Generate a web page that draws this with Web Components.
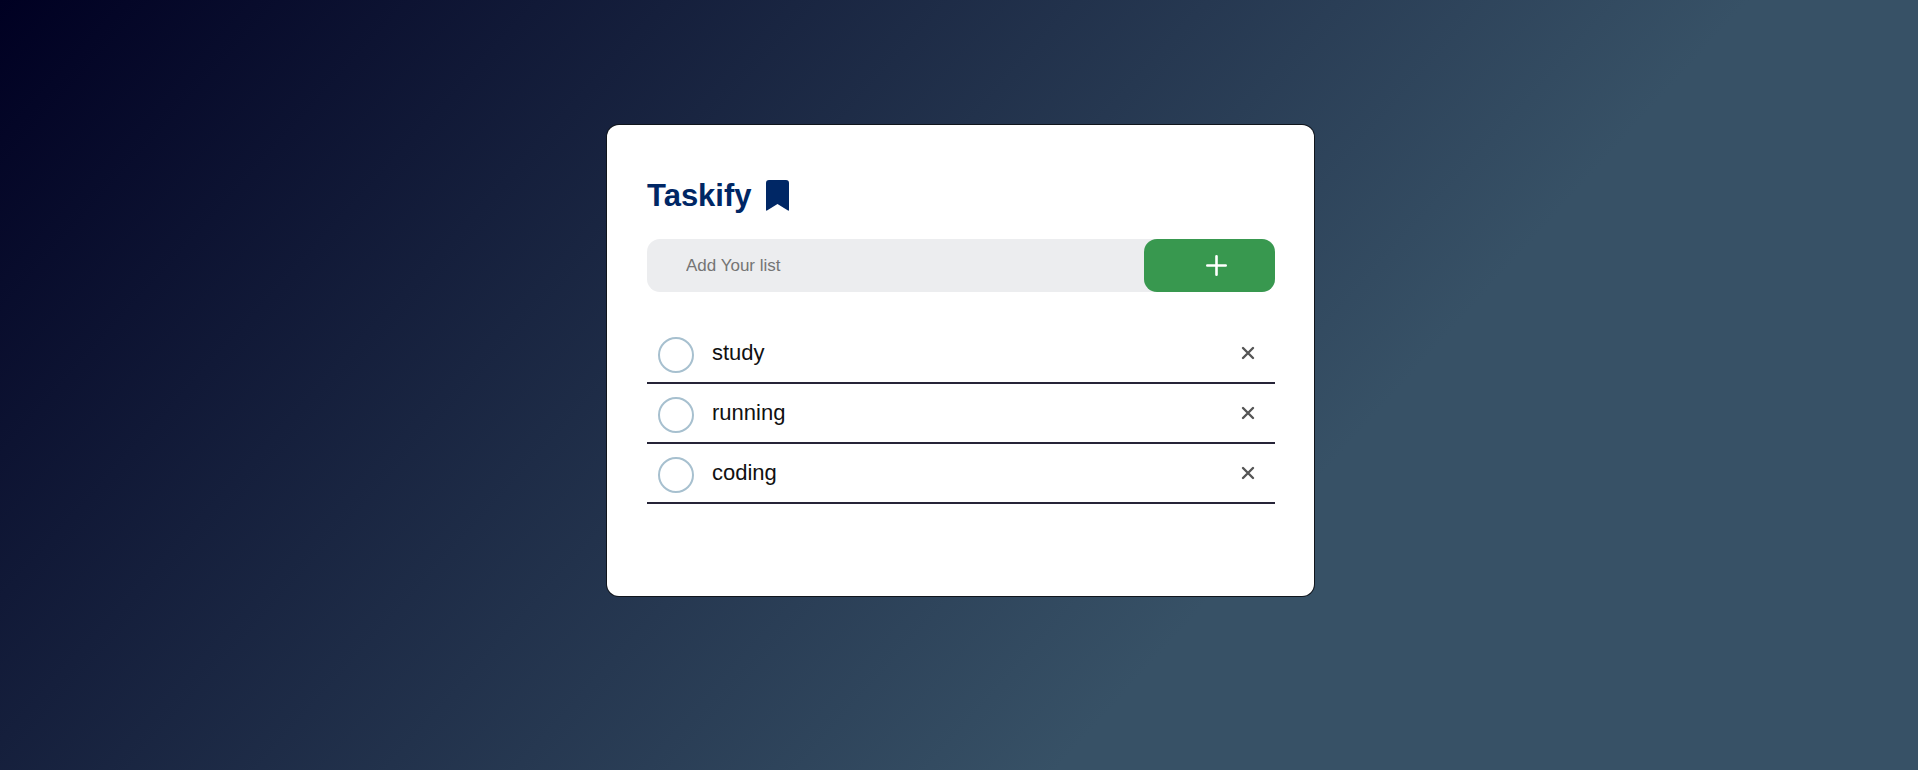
<!DOCTYPE html>
<html lang="en">
<head>
<meta charset="utf-8">
<meta name="viewport" content="width=device-width, initial-scale=1">
<title>Taskify</title>
<style>
  body {
    margin: 0;
    min-height: 100vh;
    box-sizing: border-box;
    padding: 125px 16px 16px 19px;
    font-family: "Liberation Sans", Arial, sans-serif;
    background: linear-gradient(132deg, #000022, #375166 67%) no-repeat;
  }
</style>
</head>
<body>
<task-card>
  <task-title slot="title">Taskify</task-title>
  <task-entry slot="entry"></task-entry>
  <task-item>study</task-item>
  <task-item>running</task-item>
  <task-item>coding</task-item>
</task-card>

<script>
  function mount(host, html) {
    host.attachShadow({ mode: 'open' }).innerHTML = html;
  }

  // White panel: heading, entry bar, then the list of tasks
  customElements.define('task-card', class extends HTMLElement {
    constructor() {
      super();
      mount(this, `
        <style>
          :host { display: block; }
          main {
            box-sizing: border-box;
            max-width: 707px;
            min-height: 471px;
            margin: 0 auto;
            padding: 47px 39px 40px 40px;
            border-radius: 12px;
            background: #fff;
            box-shadow: 0 0 0 1px #10151c;
          }
          .list { display: block; margin-top: 32px; }
        </style>
        <main>
          <slot name="title"></slot>
          <slot name="entry"></slot>
          <div class="list" role="list"><slot></slot></div>
        </main>`);
      this.addEventListener('task-add', e => {
        const item = document.createElement('task-item');
        item.textContent = e.detail;
        this.append(item);
      });
    }
  });

  customElements.define('task-title', class extends HTMLElement {
    constructor() {
      super();
      mount(this, `
        <style>
          :host { display: flex; align-items: center; gap: 14px; height: 47px; margin-bottom: 20px; color: #002765; }
          h1 { margin: 0; font-size: 31px; line-height: 47px; font-weight: 600; }
          svg { display: block; }
        </style>
        <h1><slot></slot></h1>
        <svg width="23" height="31" viewBox="0 0 23 31" aria-hidden="true">
          <path fill="currentColor" d="M3 0H20Q23 0 23 3V30Q23 31 22 30.500L11.500 24L1 30.500Q0 31 0 30V3Q0 0 3 0Z"/>
        </svg>`);
    }
  });

  customElements.define('task-entry', class extends HTMLElement {
    constructor() {
      super();
      mount(this, `
        <style>
          :host { display: block; }
          form { display: flex; height: 53px; border-radius: 13px; background: #ecedef; }
          input {
            flex: 1; min-width: 0; padding: 0 0 0 39px; border: 0; outline: 0;
            background: transparent; font: 17px "Liberation Sans", Arial, sans-serif; color: #111;
          }
          input::placeholder { color: #757575; opacity: 1; }
          button {
            display: flex; align-items: center; justify-content: center;
            width: 131px; padding: 0 0 0 14px; border: 0; border-radius: 13px;
            background: #38984f; color: #fff; cursor: pointer;
          }
        </style>
        <form>
          <input type="text" placeholder="Add Your list" aria-label="Add Your list" autocomplete="off">
          <button type="submit" aria-label="Add">
            <svg width="21" height="21" viewBox="0 0 21 21" fill="none" stroke="currentColor" stroke-width="2.600" stroke-linecap="round" aria-hidden="true">
              <path d="M10.500 1.300V19.700M1.300 10.500H19.700"/>
            </svg>
          </button>
        </form>`);
      const input = this.shadowRoot.querySelector('input');
      this.shadowRoot.querySelector('form').addEventListener('submit', e => {
        e.preventDefault();
        const text = input.value.trim();
        if (!text) return;
        this.dispatchEvent(new CustomEvent('task-add', { detail: text, bubbles: true }));
        input.value = '';
      });
    }
  });

  customElements.define('task-item', class extends HTMLElement {
    constructor() {
      super();
      mount(this, `
        <style>
          :host { display: block; }
          .row {
            display: flex; align-items: flex-start; box-sizing: border-box; min-height: 60px;
            padding: 0 11px; border-bottom: 2px solid #262438;
          }
          input {
            appearance: none; box-sizing: border-box; flex: none; width: 36px; height: 36px;
            margin: 13px 18px 0 0; padding: 0; border: 2px solid #a7c0cf; border-radius: 50%; cursor: pointer;
          }
          input:checked { background: #a7c0cf; }
          label { flex: 1; font-size: 22px; line-height: 58px; color: #111; }
          input:checked + label { text-decoration: line-through; }
          button {
            display: flex; align-items: center; justify-content: center;
            width: 32px; height: 58px; padding: 0; border: 0; background: none; color: #555; cursor: pointer;
          }
        </style>
        <div class="row" role="listitem">
          <input type="checkbox" id="done">
          <label for="done"><slot></slot></label>
          <button type="button" aria-label="Remove">
            <svg width="14" height="14" viewBox="0 0 14 14" fill="none" stroke="currentColor" stroke-width="2.400" stroke-linecap="round" aria-hidden="true">
              <path d="M2 2L12 12M12 2L2 12"/>
            </svg>
          </button>
        </div>`);
      this.shadowRoot.querySelector('button').addEventListener('click', () => this.remove());
    }
  });
</script>
</body>
</html>
